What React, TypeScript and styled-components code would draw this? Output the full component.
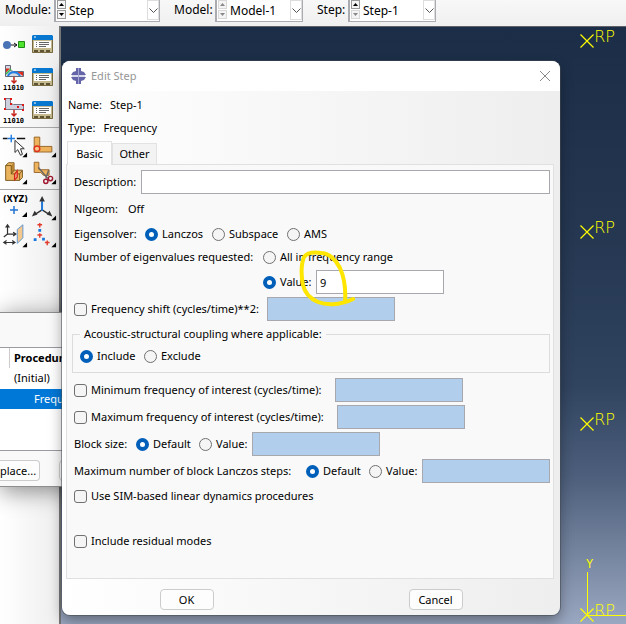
import React from "react";
import styled, { createGlobalStyle, css } from "styled-components";

const GlobalStyle = createGlobalStyle`
  *, *::before, *::after { box-sizing: border-box; }
  body {
    margin: 0;
    overflow: hidden;
    font-family: "Noto Sans", "Open Sans", sans-serif;
    font-size: 11px;
    line-height: 20px;
    color: #000;
    white-space: nowrap;
  }
  button, input, select { font: inherit; color: inherit; margin: 0; }
`;

const Page = styled.div`
  position: relative;
  display: flex;
  flex-direction: column;
  min-height: 100vh;
  overflow: hidden;
`;

/* ---------- context bar ---------- */

const ContextBar = styled.header`
  display: flex;
  align-items: flex-start;
  gap: 14px;
  height: 26px;
  padding-left: 5px;
  background: linear-gradient(#f8f8f8, #efefef);
`;

const ContextField = styled.div<{ $label: number }>`
  display: flex;
  gap: 4px;
  font-size: 12px;
  > label { width: ${(p) => p.$label}px; }
`;

const Combo = styled.div<{ $width: number }>`
  display: flex;
  width: ${(p) => p.$width}px;
  height: 22px;
  padding-left: 1px;
  background: #fff;
  border: 2px solid #a9abb0;
  border-width: 0 1px 1px 2px;
`;

const Spinner = styled.div`
  display: flex;
  flex-direction: column;
  gap: 1px;
`;

const SpinButton = styled.button`
  display: grid;
  place-items: center;
  width: 9px;
  height: 9px;
  padding: 0;
  border: 1px solid #999;
  background: #f4f4f4;
  &:disabled { border-color: #d8d8d8; color: #888; }
`;

const ComboSelect = styled.select`
  flex: 1;
  min-width: 0;
  padding: 0 0 0 3px;
  border: 0;
  background: transparent;
  appearance: none;
  line-height: 20px;
`;

const ComboArrow = styled.span`
  display: grid;
  place-items: center;
  width: 12px;
  height: 20px;
  border: 1px solid #ddd;
  pointer-events: none;
`;

function ContextCombo(props: {
  id: string; label: string; value: string; labelWidth: number; width: number; up: boolean; down: boolean;
}) {
  return (
    <ContextField $label={props.labelWidth}>
      <label htmlFor={props.id}>{props.label}</label>
      <Combo $width={props.width}>
        <Spinner>
          <SpinButton disabled={!props.up} aria-label="Previous">
            <svg width="5" height="3"><path d="M0 3 2.500 0 5 3z" fill="currentColor" /></svg>
          </SpinButton>
          <SpinButton disabled={!props.down} aria-label="Next">
            <svg width="5" height="3"><path d="M0 0 2.500 3 5 0z" fill="currentColor" /></svg>
          </SpinButton>
        </Spinner>
        <ComboSelect id={props.id}><option>{props.value}</option></ComboSelect>
        <ComboArrow>
          <svg width="9" height="5" fill="none" stroke="#555"><path d="M.5 .5 4.500 4.500 8.500 .5" /></svg>
        </ComboArrow>
      </Combo>
    </ContextField>
  );
}

/* ---------- workspace ---------- */

const Workspace = styled.main`
  display: flex;
  flex: 1;
`;

const Toolbox = styled.nav`
  width: 59px;
  background: linear-gradient(90deg, #fff, #eee);
`;

const ToolGroup = styled.div<{ $tight?: boolean }>`
  display: grid;
  grid-template-columns: 29px 29px;
  grid-auto-rows: ${(p) => (p.$tight ? 27 : 33)}px;
  padding: 2px 0 0;
  border-bottom: 1px solid #a8a8a8;
  &:nth-child(2) { padding: 4px 0 3px; }
  &:nth-child(3) { padding-top: 5px; border: 0; }
`;

const ToolButton = styled.button`
  display: grid;
  place-items: center;
  padding: 0;
  border: 0;
  background: none;
`;

const Viewport = styled.section`
  position: relative;
  flex: 1;
  border-left: 2px solid #777;
  border-top: 1px solid #5e6268;
  background: linear-gradient(#1b2d47 0%, #243650 33%, #30435f 60%, #4c5e7b 75%, #9aa7c0 100%);
`;

const Marker = styled.div<{ $top: number }>`
  position: absolute;
  top: ${(p) => p.$top}px;
  right: 11px;
  display: flex;
  color: #ff0;
  font: 200 16px/18px "DejaVu Sans", sans-serif;
  svg { margin-top: 6px; }
`;

const Axes = styled.div`
  position: absolute;
  top: 531px;
  right: 0;
  width: 40px;
  color: #ff0;
  font: 12px/14px "Liberation Mono", monospace;
  svg { display: block; }
`;

function ReferencePoint({ top }: { top: number }) {
  return (
    <Marker $top={top}>
      <svg width="14" height="14" stroke="currentColor" strokeWidth="1.2">
        <path d="M.5 .5 13.500 13.500M13.500 .5 .5 13.500" />
      </svg>
      RP
    </Marker>
  );
}

/* ---------- tool icons ---------- */

const Corner = () => <path d="M28 22v5h-5z" fill="#000" />;

const LinkIcon = () => (
  <svg width="29" height="29" viewBox="0 0 29 29">
    <circle cx="7" cy="15" r="4" fill="#4a73b5" />
    <path d="M11 15h6M14 13l3 2-3 2" stroke="#111" fill="none" />
    <path d="M18.500 11.500h6v6h-6z" fill="#4fe32d" stroke="#208a18" />
  </svg>
);

const ManagerIcon = () => (
  <svg width="29" height="29" viewBox="0 0 29 29">
    <path d="M3 6h21v17H3z" fill="#c5b98f" />
    <path d="M4 5h19l1 1v4H3V6z" fill="#0877cf" />
    <path d="M5 7h2" stroke="#fff" />
    <path d="M5 11h17v7H5z" fill="#fff" />
    <path d="M7 12.500h1M10 12.500h10M7 14.500h1M10 14.500h10M7 16.500h1M10 16.500h7" stroke="#666" />
    <path d="M5 20h4v2H5zM11 20h4v2h-4zM17 20h4v2h-4z" fill="#5e5332" />
    <path d="M3.500 10v12.500h20V10" fill="none" stroke="#776b43" />
  </svg>
);

const BitsLabel = styled.text`
  font: bold 7px "DejaVu Sans Mono", monospace;
`;

const Bits = () => <BitsLabel x="3" y="27">11010</BitsLabel>;

const LoadArrow = () => (
  <path d="M14 14v6M11.500 17.500 14 20l2.500-2.500" stroke="#c6281e" fill="none" strokeWidth="1.5" />
);

const FieldIcon = () => (
  <svg width="29" height="29" viewBox="0 0 29 29">
    <path d="M5.500 2.500h5v5l3 1h10v5h-18z" fill="#d4d8e0" stroke="#667" />
    <path d="M6 5.500h4l-4 4zM17 9h6v4z" fill="#e12b1d" />
    <path d="M8 13c2-5 9-5 12 0" stroke="#2380e8" strokeWidth="2" fill="none" />
    <path d="M6 11l5-5" stroke="#37b64a" strokeWidth="1.5" />
    <LoadArrow />
    <Bits />
  </svg>
);

const HistoryIcon = () => (
  <svg width="29" height="29" viewBox="0 0 29 29">
    <path d="M5.500 2.500h5v5l3 1h10v5h-18z" fill="#cfd0de" stroke="#778" />
    <path
      d="M4 2h2v2H4zM10 2h2v2h-2zM4 12h2v2H4zM10 7h2v2h-2zM22 8h2v2h-2zM17 10h2v2h-2zM22 13h2v2h-2z"
      fill="#e01818"
    />
    <LoadArrow />
    <Bits />
  </svg>
);

const PickIcon = () => (
  <svg width="29" height="27" viewBox="0 0 29 29">
    <path d="M2 7h5M17 7h9" stroke="#111" strokeWidth="1.5" />
    <path d="M7 7h8M11 3v8" stroke="#1d7be0" strokeWidth="1.500" />
    <path d="M15 9v13l3-3 3 6 2-1-2-6h4z" fill="#fff" stroke="#222" />
    <Corner />
  </svg>
);

const BracketIcon = () => (
  <svg width="29" height="27" viewBox="0 0 29 29">
    <path d="M4.500 5.500h6v10h13v6h-19z" fill="#efb35c" stroke="#94642a" />
    <circle cx="7.500" cy="18" r="3" fill="#f7c98a" stroke="#e0301c" strokeWidth="1.500" />
    <Corner />
  </svg>
);

const SolidIcon = () => (
  <svg width="29" height="27" viewBox="0 0 29 29">
    <path d="M5 7l3-3h6v8h9v8l-3 3H5z" fill="#eab45e" stroke="#7a561f" />
    <path d="M11 7l3-3v8l-3 4z" fill="#b9822f" />
    <path d="M5 7h6v9h9M11 16l3-4M20 16l3-4M20 16v7" stroke="#7c591f" fill="none" />
    <path d="M14.500 16.500l3-4v7l-3 3z" fill="#e9967a" stroke="#d6261c" strokeWidth="1.200" />
    <Corner />
  </svg>
);

const CutIcon = () => (
  <svg width="29" height="27" viewBox="0 0 29 29">
    <path d="M4.500 3.500h5v8h11v6h-6l-3-3h-7z" fill="#efb35c" stroke="#94642a" />
    <path d="M9 9l10 12M20 12l-3 9" stroke="#666" strokeWidth="1.500" />
    <circle cx="17" cy="24" r="2.300" fill="none" stroke="#a01830" strokeWidth="1.500" />
    <circle cx="22" cy="21" r="2.300" fill="none" stroke="#a01830" strokeWidth="1.500" />
    <Corner />
  </svg>
);

const XyzText = styled.span`
  display: block;
  padding-left: 2px;
  font: bold 8px/10px "DejaVu Sans", sans-serif;
`;

const XyzIcon = () => (
  <span>
    <XyzText>(XYZ)</XyzText>
    <svg width="29" height="14" viewBox="0 0 29 14">
      <path d="M10 5h8M14 1v8" stroke="#2374d4" strokeWidth="1.500" />
      <path d="M27 7v5h-5z" />
    </svg>
  </span>
);

const TriadIcon = () => (
  <svg width="29" height="27" viewBox="0 0 29 29">
    <path d="M13 16V5M13 16l-8 5M13 16l8 5" stroke="#333" strokeWidth="1.500" />
    <path d="M13 1l-3 6h6zM2 23l3-6 3 4zM24 23l-3-6-3 4z" fill="#333" />
    <path d="M13 7v10" stroke="#1d7be0" strokeWidth="2" />
    <Corner />
  </svg>
);

const PlaneIcon = () => (
  <svg width="29" height="27" viewBox="0 0 29 29">
    <path
      d="M7 13V4M7 13h8M7 13l-4 3M5 6l2-3 2 3M13 11l3 2-3 2M3 22h12M6 20l-3 2 3 2M12 20l3 2-3 2"
      fill="none" stroke="#333" strokeWidth="1.300"
    />
    <path d="M17.500 8l6-5v14l-6 6z" fill="#f5c98b" stroke="#5b93d3" />
    <Corner />
  </svg>
);

const PointsIcon = () => (
  <svg width="29" height="27" viewBox="0 0 29 29">
    <path d="M8 3h5M10.500 1v5M8 14h5M10.500 12v5M16 22h5M18.500 20v5" stroke="#e23a2c" strokeWidth="1.500" />
    <path d="M9 7.500h3v3H9zM4 17.500h3v3H4zM13 17h3v3h-3z" fill="#1777dc" />
    <Corner />
  </svg>
);

/* ---------- manager window ---------- */

const Manager = styled.aside`
  position: absolute;
  top: 312px;
  left: 0;
  width: 120px;
  padding-top: 34px;
  background: #f9f9f9;
  border: 1px solid #8e8e8e;
  border-left: 0;
  box-shadow: 0 4px 22px rgba(0, 0, 0, 0.45);
`;

const ManagerTable = styled.table`
  width: 100%;
  height: 104px;
  border-spacing: 0;
  border-top: 1px solid #9a9aa0;
  border-bottom: 1px solid #9a9aa0;
  background: #fff;
  th, td { height: 20px; padding: 0; text-align: left; line-height: 18px; }
  td:last-child, th:last-child { padding-left: 4px; }
  td:first-child { width: 10px; }
  th:first-child { border-right: 1px solid #ccc; }
`;

const SelectedRow = styled.tr`
  background: #0078d7;
  color: #fff;
  && td:last-child { padding-left: 24px; }
`;

const ManagerActions = styled.div`
  display: flex;
  gap: 19px;
  padding: 9px 0 5px;
`;

const PushButton = styled.button<{ $width: number }>`
  width: ${(p) => p.$width}px;
  height: 21px;
  padding: 0;
  line-height: 18px;
  background: #fdfdfd;
  border: 1px solid #ccc;
  border-radius: 4px;
`;

const EdgeButton = styled(PushButton)`
  border-left: 0;
  border-radius: 0 4px 4px 0;
  text-align: left;
`;

/* ---------- edit step dialog ---------- */

const Dialog = styled.section`
  position: absolute;
  top: 61px;
  left: 62px;
  right: 66px;
  overflow: hidden;
  border-radius: 8px;
  background: linear-gradient(90deg, #fff, #eee);
  box-shadow: 0 0 0 1px rgba(70, 75, 82, 0.55), 0 6px 14px rgba(0, 0, 0, 0.35);
`;

const TitleBar = styled.div`
  display: flex;
  align-items: center;
  height: 30px;
  padding: 0 9px;
  background: #fff;
  color: #969696;
  h1 { flex: 1; margin: 0 0 0 5px; font: inherit; }
`;

const CloseButton = styled.button`
  display: grid;
  padding: 0;
  border: 0;
  background: none;
`;

const Facts = styled.dl`
  display: grid;
  gap: 3px;
  margin: 0;
  padding: 4px 6px 3px;
  div { display: flex; gap: 8px; }
  dd { margin: 0; }
`;

const Tabs = styled.div`
  display: flex;
  align-items: flex-end;
  padding-left: 5px;
`;

const Tab = styled.button<{ $active?: boolean }>`
  position: relative;
  z-index: 1;
  width: 45px;
  height: ${(p) => (p.$active ? 24 : 21)}px;
  margin-bottom: ${(p) => (p.$active ? -1 : 0)}px;
  padding: 0;
  line-height: 20px;
  border: 1px solid #e2e2e2;
  border-bottom: 0;
  background: ${(p) => (p.$active ? "#fcfcfc" : "#f3f3f3")};
`;

const Panel = styled.div`
  display: flex;
  flex-direction: column;
  gap: 3px;
  margin: 0 6px 0 4px;
  padding: 5px 3px 27px 5px;
  background: #f9f9f9;
  border: 1px solid #e0e0e0;
`;

const Row = styled.div<{ $tall?: boolean; $indent?: number; $spaced?: boolean }>`
  display: flex;
  align-items: center;
  height: ${(p) => (p.$tall ? 24 : 20)}px;
  padding-left: ${(p) => p.$indent ?? 2}px;
  ${(p) => p.$spaced && css`margin-top: 22px;`}
`;

const Caption = styled.label<{ $width: number }>`
  flex: none;
  width: ${(p) => p.$width}px;
`;

const TextBox = styled.input<{ $wide?: boolean }>`
  flex: ${(p) => (p.$wide ? "1" : "0 0 128px")};
  min-width: 0;
  height: 24px;
  padding: 0 3px;
  border: 1px solid #a6a8ad;
  border-radius: 0;
  background: #fff;
  &:disabled { background: #b1ceec; }
`;

const Choice = styled.label<{ $width: number }>`
  display: flex;
  flex: none;
  align-items: center;
  gap: 4px;
  width: ${(p) => p.$width}px;
  input {
    flex: none;
    width: 13px;
    height: 13px;
    appearance: none;
    border: 1px solid #707070;
    background: #f5f5f5;
  }
  input[type="radio"] { border-radius: 50%; }
  input[type="radio"]:checked { border: 4px solid #005fb8; background: #fff; }
  input[type="checkbox"] { border-radius: 3px; }
`;

const Group = styled.fieldset`
  display: flex;
  margin: 0 0 2px;
  padding: 2px 7px 6px;
  min-width: 0;
  border: 1px solid #dcdcdc;
  legend { padding: 0 4px; line-height: 20px; }
`;

const Footer = styled.footer`
  display: flex;
  justify-content: space-around;
  padding: 10px 0 5px;
`;

const Ink = styled.svg`
  position: absolute;
  left: 236px;
  top: 187px;
  pointer-events: none;
`;

function Radio(p: { name: string; label: string; width: number; checked?: boolean }) {
  return (
    <Choice $width={p.width}>
      <input type="radio" name={p.name} defaultChecked={p.checked} />
      {p.label}
    </Choice>
  );
}

function Check(p: { label: string; width: number }) {
  return (
    <Choice $width={p.width}>
      <input type="checkbox" />
      {p.label}
    </Choice>
  );
}

function EditStepDialog() {
  return (
    <Dialog role="dialog" aria-labelledby="dialog-title">
      <TitleBar>
        <svg width="15" height="16" viewBox="0 0 15 16">
          <path d="M5 0h5v3l3 1 2 3H0l2-3 3-1zM0 9h15l-2 3-3 1v3H5v-3l-3-1z" fill="#6465a8" />
          <path d="M1 7h13v2H1z" fill="#d9d9ec" />
          <path d="M7.500 0v16" stroke="#a3a4d0" />
        </svg>
        <h1 id="dialog-title">Edit Step</h1>
        <CloseButton aria-label="Close">
          <svg width="12" height="12" stroke="#888" fill="none"><path d="M1 1 11 11M11 1 1 11" /></svg>
        </CloseButton>
      </TitleBar>
      <Facts>
        <div><dt>Name:</dt><dd>Step-1</dd></div>
        <div><dt>Type:</dt><dd>Frequency</dd></div>
      </Facts>
      <Tabs role="tablist">
        <Tab role="tab" aria-selected="true" $active>Basic</Tab>
        <Tab role="tab" aria-selected="false">Other</Tab>
      </Tabs>
      <Panel role="tabpanel">
        <Row $tall>
          <Caption htmlFor="description" $width={67}>Description:</Caption>
          <TextBox id="description" $wide />
        </Row>
        <Row $tall>
          <Caption as="span" $width={54}>Nlgeom:</Caption>
          <span>Off</span>
        </Row>
        <Row role="radiogroup" aria-label="Eigensolver">
          <Caption as="span" $width={71}>Eigensolver:</Caption>
          <Radio name="solver" label="Lanczos" width={67} checked />
          <Radio name="solver" label="Subspace" width={75} />
          <Radio name="solver" label="AMS" width={50} />
        </Row>
        <Row>
          <Caption as="span" $width={189}>Number of eigenvalues requested:</Caption>
          <Radio name="count" label="All in frequency range" width={140} />
        </Row>
        <Row $tall $indent={191}>
          <Radio name="count" label="Value:" width={53} checked />
          <TextBox aria-label="Number of eigenvalues" defaultValue="9" />
        </Row>
        <Row $tall>
          <Check label="Frequency shift (cycles/time)**2:" width={193} />
          <TextBox aria-label="Frequency shift" disabled />
        </Row>
        <Group>
          <legend>Acoustic-structural coupling where applicable:</legend>
          <Radio name="coupling" label="Include" width={64} checked />
          <Radio name="coupling" label="Exclude" width={64} />
        </Group>
        <Row $tall>
          <Check label="Minimum frequency of interest (cycles/time):" width={261} />
          <TextBox aria-label="Minimum frequency" disabled />
        </Row>
        <Row $tall>
          <Check label="Maximum frequency of interest (cycles/time):" width={263} />
          <TextBox aria-label="Maximum frequency" disabled />
        </Row>
        <Row $tall>
          <Caption as="span" $width={62}>Block size:</Caption>
          <Radio name="block" label="Default" width={63} checked />
          <Radio name="block" label="Value:" width={53} />
          <TextBox aria-label="Block size" disabled />
        </Row>
        <Row $tall>
          <Caption as="span" $width={232}>Maximum number of block Lanczos steps:</Caption>
          <Radio name="steps" label="Default" width={63} checked />
          <Radio name="steps" label="Value:" width={53} />
          <TextBox aria-label="Maximum steps" disabled />
        </Row>
        <Row><Check label="Use SIM-based linear dynamics procedures" width={250} /></Row>
        <Row $spaced><Check label="Include residual modes" width={160} /></Row>
      </Panel>
      <Footer>
        <PushButton $width={54}>OK</PushButton>
        <PushButton $width={54}>Cancel</PushButton>
      </Footer>
      <Ink width="60" height="62" fill="none" stroke="#ffe600" strokeWidth="4" strokeLinecap="round" strokeLinejoin="round">
        <path d="M23 5C16 4 9 5 6 9C3 16 3 28 5 37C7 46 13 51 20 54C27 57 41 58 55 51M23 5C31 5 38 12 42 20C46 29 48 40 47 54" />
      </Ink>
    </Dialog>
  );
}

const stepTools = [LinkIcon, ManagerIcon, FieldIcon, ManagerIcon, HistoryIcon, ManagerIcon];
const partitionTools = [PickIcon, BracketIcon, SolidIcon, CutIcon];
const datumTools = [XyzIcon, TriadIcon, PlaneIcon, PointsIcon];

function Tools({ icons, tight }: { icons: React.FC[]; tight?: boolean }) {
  return (
    <ToolGroup $tight={tight}>
      {icons.map((Icon, i) => <ToolButton key={i}><Icon /></ToolButton>)}
    </ToolGroup>
  );
}

export default function App() {
  return (
    <Page>
      <GlobalStyle />
      <ContextBar>
        <ContextCombo id="module" label="Module:" value="Step" labelWidth={45} width={106} up down />
        <ContextCombo id="model" label="Model:" value="Model-1" labelWidth={37} width={88} up={false} down={false} />
        <ContextCombo id="step" label="Step:" value="Step-1" labelWidth={27} width={88} up down={false} />
      </ContextBar>
      <Workspace>
        <Toolbox>
          <Tools icons={stepTools} />
          <Tools icons={partitionTools} tight />
          <Tools icons={datumTools} tight />
        </Toolbox>
        <Viewport>
          <ReferencePoint top={1} />
          <ReferencePoint top={192} />
          <ReferencePoint top={384} />
          <ReferencePoint top={575} />
          <Axes>
            Y
            <svg width="40" height="46" stroke="currentColor" fill="none"><path d="M1.500 0V43.500H40" /></svg>
          </Axes>
        </Viewport>
      </Workspace>
      <Manager>
        <ManagerTable>
          <thead><tr><th /><th>Procedure</th></tr></thead>
          <tbody>
            <tr><td /><td>(Initial)</td></tr>
            <SelectedRow><td /><td>Frequency</td></SelectedRow>
            <tr><td /><td /></tr>
            <tr><td /><td /></tr>
          </tbody>
        </ManagerTable>
        <ManagerActions>
          <EdgeButton $width={40}>place...</EdgeButton>
          <PushButton $width={60} aria-label="Rename" />
        </ManagerActions>
      </Manager>
      <EditStepDialog />
    </Page>
  );
}
